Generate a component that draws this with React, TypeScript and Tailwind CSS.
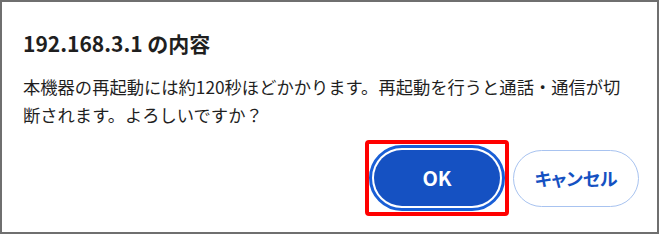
import React from "react";

export default function App() {
  return (
    <div className="w-[660px] h-[235px] bg-white">
      <div
        className="w-[659px] h-[234px] border-2 border-[#6f6f6f] bg-white flex flex-col pl-[21px] pr-[18px] pt-[26px] text-[#1f1f1f]"
        style={{ fontFamily: '"Noto Sans CJK JP", "Noto Sans", sans-serif' }}
      >
        <h1 className="text-[21px] leading-[30px] font-bold">192.168.3.1 の内容</h1>
        <p className="mt-[15px] text-[17.3px] leading-[28px]">
          本機器の再起動には約120秒ほどかかります。再起動を行うと通話・通信が切
          <br />
          断されます。よろしいですか？
        </p>
        <div className="mt-auto mb-[16px] flex items-center justify-end gap-[4px]">
          <div className="border-4 border-[#ff0000] rounded-[4px] px-[5px] py-[6px]">
            <button className="w-[126px] h-[56px] rounded-full bg-[#1551c2] text-white text-[20px] font-bold outline-[3px] outline-solid outline-[#1a5fd6] outline-offset-[2px] [font-feature-settings:'palt']">
              OK
            </button>
          </div>
          <button className="w-[126px] h-[57px] rounded-full bg-white border border-[#a8c3f0] text-[#1551c2] text-[18px] font-bold [font-feature-settings:'palt']">
            キャンセル
          </button>
        </div>
      </div>
    </div>
  );
}
